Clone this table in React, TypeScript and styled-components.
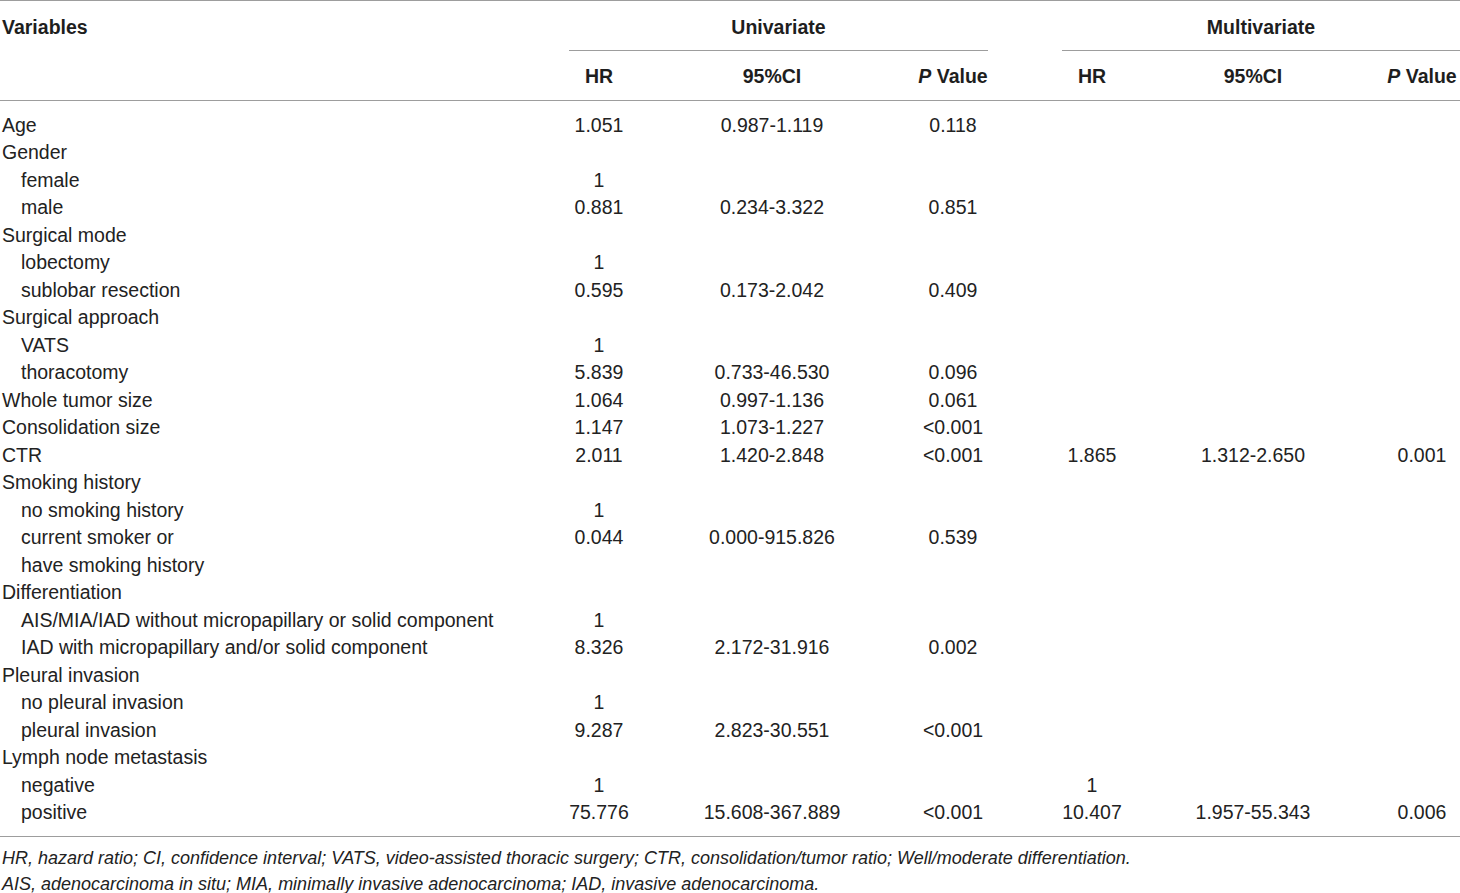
import React from "react";
import styled, { createGlobalStyle } from "styled-components";

const GlobalStyle = createGlobalStyle`
  html, body {
    margin: 0;
    padding: 0;
    background: #ffffff;
  }
  body {
    font-family: "Liberation Sans", Arial, sans-serif;
    color: #222222;
  }
`;

const COLS = "569px 60px 286px 76px 71px 60px 262px 76px";
const RULE = "#9d9d9d";

const Page = styled.div`
  width: 1460px;
  height: 893px;
  overflow: hidden;
`;

const Table = styled.div`
  border-top: 1px solid ${RULE};
`;

const Head = styled.div`
  display: grid;
  grid-template-columns: ${COLS};
  grid-template-rows: 50px 49px;
  border-bottom: 1px solid ${RULE};
  font-size: 19.5px;
  font-weight: 700;
  line-height: 22px;
  color: #1e1e1e;
`;

const HeadCell = styled.div<{ $row: number; $span?: string; $rule?: boolean; $left?: boolean; $trim?: boolean }>`
  grid-row: ${(p) => p.$row};
  grid-column: ${(p) => p.$span || "auto"};
  box-sizing: border-box;
  padding-top: ${(p) => (p.$row === 1 ? "15px" : "14px")};
  padding-left: ${(p) => (p.$left ? "2px" : "0")};
  margin-right: ${(p) => (p.$trim ? "3px" : "0")};
  text-align: ${(p) => (p.$left ? "left" : "center")};
  white-space: nowrap;
  border-bottom: ${(p) => (p.$rule ? `1px solid ${RULE}` : "none")};
`;

const Ital = styled.span`
  font-style: italic;
`;

const Body = styled.div`
  padding: 10.5px 0 9.5px;
  border-bottom: 1px solid ${RULE};
  font-size: 19.5px;
  line-height: 27.5px;
`;

const Row = styled.div`
  display: grid;
  grid-template-columns: ${COLS};
  height: 27.5px;
`;

const Label = styled.div<{ $indent?: boolean }>`
  padding-left: ${(p) => (p.$indent ? "21px" : "2px")};
  white-space: nowrap;
`;

const Value = styled.div`
  text-align: center;
  white-space: nowrap;
`;

const Notes = styled.div`
  padding: 8px 0 0 2px;
  font-size: 18px;
  font-style: italic;
  line-height: 26px;
`;

const Note = styled.div`
  white-space: nowrap;
`;

type R = {
  label: string;
  indent?: boolean;
  hr?: string;
  ci?: string;
  p?: string;
  mhr?: string;
  mci?: string;
  mp?: string;
};

const rows: R[] = [
  { label: "Age", hr: "1.051", ci: "0.987-1.119", p: "0.118" },
  { label: "Gender" },
  { label: "female", indent: true, hr: "1" },
  { label: "male", indent: true, hr: "0.881", ci: "0.234-3.322", p: "0.851" },
  { label: "Surgical mode" },
  { label: "lobectomy", indent: true, hr: "1" },
  { label: "sublobar resection", indent: true, hr: "0.595", ci: "0.173-2.042", p: "0.409" },
  { label: "Surgical approach" },
  { label: "VATS", indent: true, hr: "1" },
  { label: "thoracotomy", indent: true, hr: "5.839", ci: "0.733-46.530", p: "0.096" },
  { label: "Whole tumor size", hr: "1.064", ci: "0.997-1.136", p: "0.061" },
  { label: "Consolidation size", hr: "1.147", ci: "1.073-1.227", p: "<0.001" },
  {
    label: "CTR",
    hr: "2.011",
    ci: "1.420-2.848",
    p: "<0.001",
    mhr: "1.865",
    mci: "1.312-2.650",
    mp: "0.001",
  },
  { label: "Smoking history" },
  { label: "no smoking history", indent: true, hr: "1" },
  { label: "current smoker or", indent: true, hr: "0.044", ci: "0.000-915.826", p: "0.539" },
  { label: "have smoking history", indent: true },
  { label: "Differentiation" },
  { label: "AIS/MIA/IAD without micropapillary or solid component", indent: true, hr: "1" },
  {
    label: "IAD with micropapillary and/or solid component",
    indent: true,
    hr: "8.326",
    ci: "2.172-31.916",
    p: "0.002",
  },
  { label: "Pleural invasion" },
  { label: "no pleural invasion", indent: true, hr: "1" },
  { label: "pleural invasion", indent: true, hr: "9.287", ci: "2.823-30.551", p: "<0.001" },
  { label: "Lymph node metastasis" },
  { label: "negative", indent: true, hr: "1", mhr: "1" },
  {
    label: "positive",
    indent: true,
    hr: "75.776",
    ci: "15.608-367.889",
    p: "<0.001",
    mhr: "10.407",
    mci: "1.957-55.343",
    mp: "0.006",
  },
];

export default function App() {
  return (
    <Page>
      <GlobalStyle />
      <Table>
        <Head>
          <HeadCell $row={1} $span="1 / 2" $left>
            Variables
          </HeadCell>
          <HeadCell $row={1} $span="2 / 5" $rule $trim>
            Univariate
          </HeadCell>
          <HeadCell $row={1} $span="6 / 9" $rule>
            Multivariate
          </HeadCell>
          <HeadCell $row={2} $span="2 / 3">HR</HeadCell>
          <HeadCell $row={2} $span="3 / 4">95%CI</HeadCell>
          <HeadCell $row={2} $span="4 / 5">
            <Ital>P</Ital> Value
          </HeadCell>
          <HeadCell $row={2} $span="6 / 7">HR</HeadCell>
          <HeadCell $row={2} $span="7 / 8">95%CI</HeadCell>
          <HeadCell $row={2} $span="8 / 9">
            <Ital>P</Ital> Value
          </HeadCell>
        </Head>
        <Body>
          {rows.map((r, i) => (
            <Row key={i}>
              <Label $indent={r.indent}>{r.label}</Label>
              <Value>{r.hr}</Value>
              <Value>{r.ci}</Value>
              <Value>{r.p}</Value>
              <Value />
              <Value>{r.mhr}</Value>
              <Value>{r.mci}</Value>
              <Value>{r.mp}</Value>
            </Row>
          ))}
        </Body>
      </Table>
      <Notes>
        <Note>
          HR, hazard ratio; CI, confidence interval; VATS, video-assisted thoracic surgery; CTR,
          consolidation/tumor ratio; Well/moderate differentiation.
        </Note>
        <Note>
          AIS, adenocarcinoma in situ; MIA, minimally invasive adenocarcinoma; IAD, invasive
          adenocarcinoma.
        </Note>
      </Notes>
    </Page>
  );
}
